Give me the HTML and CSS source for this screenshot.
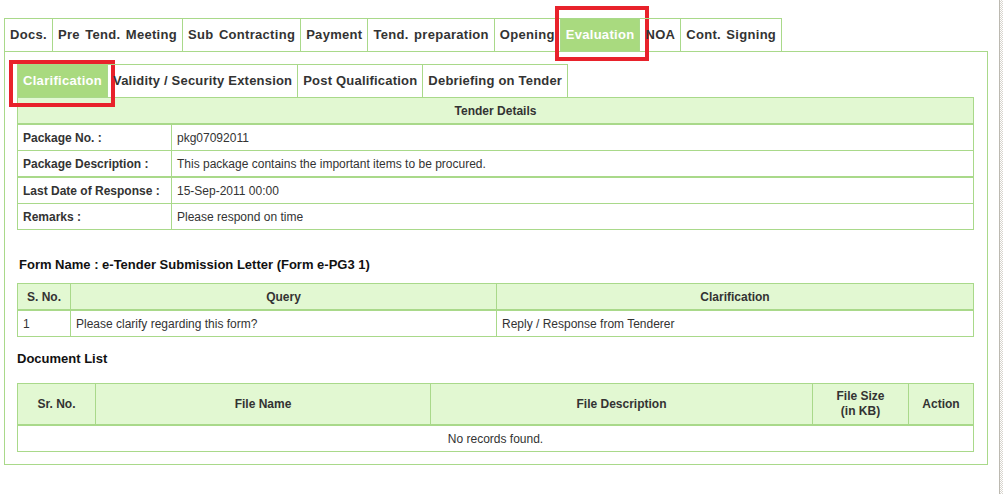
FILE: index.html
```html
<!DOCTYPE html>
<html lang="en">
<head>
<meta charset="UTF-8">
<meta name="viewport" content="width=device-width, initial-scale=1.0">
<title>Evaluation - Clarification</title>
<link rel="stylesheet" href="styles.css">
</head>
<body>
<div class="page">
  <!-- main process tabs -->
  <ul class="tabs">
    <li>Docs.</li>
    <li>Pre Tend. Meeting</li>
    <li>Sub Contracting</li>
    <li>Payment</li>
    <li>Tend. preparation</li>
    <li>Opening</li>
    <li class="active">Evaluation<span class="mark mark-main"></span></li>
    <li>NOA</li>
    <li>Cont. Signing</li>
  </ul>

  <div class="panel">
    <!-- evaluation sub tabs -->
    <ul class="tabs sub">
      <li class="active">Clarification<span class="mark mark-sub"></span></li>
      <li>Validity / Security Extension</li>
      <li>Post Qualification</li>
      <li>Debriefing on Tender</li>
    </ul>

    <table class="grid details">
      <tr><th colspan="2">Tender Details</th></tr>
      <tr><td class="lbl">Package No. :</td><td>pkg07092011</td></tr>
      <tr class="thick"><td class="lbl">Package Description :</td><td>This package contains the important items to be procured.</td></tr>
      <tr><td class="lbl">Last Date of Response :</td><td>15-Sep-2011 00:00</td></tr>
      <tr><td class="lbl">Remarks :</td><td>Please respond on time</td></tr>
    </table>

    <h4 class="form-name">Form Name : e-Tender Submission Letter (Form e-PG3 1)</h4>

    <table class="grid">
      <tr>
        <th class="c-sno">S. No.</th>
        <th class="c-query">Query</th>
        <th>Clarification</th>
      </tr>
      <tr>
        <td>1</td>
        <td>Please clarify regarding this form?</td>
        <td>Reply / Response from Tenderer</td>
      </tr>
    </table>

    <h4 class="doc-title">Document List</h4>

    <table class="grid docs">
      <tr>
        <th class="c-srno">Sr. No.</th>
        <th class="c-fname">File Name</th>
        <th class="c-fdesc">File Description</th>
        <th class="c-fsize">File Size<br>(in KB)</th>
        <th>Action</th>
      </tr>
      <tr><td colspan="5" class="empty">No records found.</td></tr>
    </table>
  </div>
</div>
<div class="scroll-edge"></div>
</body>
</html>
```

FILE: styles.css
```css
body {
  margin: 0;
  font-family: "Liberation Sans", Arial, sans-serif;
  font-size: 12px;
  color: #333;
  background: #fff;
}
.page {
  width: 984px;
  padding: 18px 0 0 4px;
}
/* Tabs */
.tabs {
  list-style: none;
  margin: 0;
  padding: 0;
  display: flex;
}
.tabs li {
  position: relative;
  border: 1px solid #a9d98a;
  border-bottom: none;
  padding: 0 5px;
  line-height: 32px;
  font-size: 13px;
  font-weight: bold;
  letter-spacing: 0.3px;
  word-spacing: 1.5px;
  color: #333;
  white-space: nowrap;
}
.tabs li + li {
  margin-left: -1px;
}
.tabs li.active {
  background: #a9da7f;
  color: #fff;
}
.tabs.sub li {
  letter-spacing: 0.2px;
  word-spacing: 0;
}
.tabs.sub li.active {
  letter-spacing: 0.3px;
}
/* red highlight boxes */
.mark {
  position: absolute;
  border: 4px solid #e8222b;
  box-sizing: border-box;
}
.mark-main {
  left: -6px;
  top: -13px;
  width: 94px;
  height: 55px;
}
.mark-sub {
  left: -9px;
  top: -5px;
  width: 106px;
  height: 47px;
}
.panel {
  border: 1px solid #a9d98a;
  padding: 12px 13px 12px 12px;
}
/* Tables */
.grid {
  width: 100%;
  border-collapse: collapse;
  border: 1px solid #a9d98a;
}
.grid th,
.grid td {
  border: 1px solid #a9d98a;
  padding: 0 5px;
  height: 25px;
  text-align: left;
}
.grid th {
  background: #e2f8d2;
  text-align: center;
  font-weight: bold;
  border-bottom: 2px solid #a9d98a;
}
.grid tr.thick td {
  border-bottom-width: 2px;
}
.details td.lbl {
  width: 143px;
  font-weight: bold;
}
h4 {
  margin: 0;
  font-size: 13px;
  line-height: 16px;
  color: #111;
}
.form-name {
  margin: 27px 0 10px 2px;
}
.doc-title {
  margin: 14px 0 16px;
}
.c-sno { width: 42px; }
.c-query { width: 415px; }
.c-srno { width: 67px; }
.c-fname { width: 324px; }
.c-fdesc { width: 371px; }
.c-fsize { width: 85px; line-height: 15px; }
.docs th {
  height: 40px;
}
.docs td.empty {
  text-align: center;
}
.scroll-edge {
  position: fixed;
  top: 0;
  right: 0;
  width: 3px;
  height: 100%;
  border-left: 1px solid #bcb9b1;
  background: repeating-conic-gradient(#d8d5ce 0 25%, #fff 0 50%) 0 0 / 2px 2px;
}
```
